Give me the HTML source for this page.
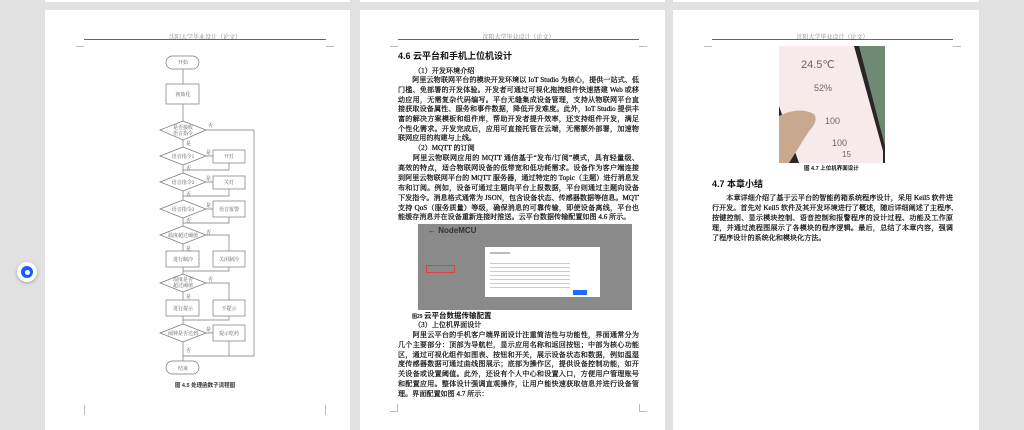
<!DOCTYPE html>
<html><head><meta charset="utf-8"><style>
*{margin:0;padding:0;box-sizing:border-box}
body{width:1024px;height:414px;background:#e1e1e1;position:relative;overflow:hidden;font-family:"Liberation Serif","Noto Serif CJK SC",serif;color:#111}
.pg{position:absolute;background:#fff;top:10px;height:420px}
.top{position:absolute;background:#fff;top:0;height:2px}
.hd{position:absolute;font-size:6px;color:#888;text-align:center;top:32px}
.hl{position:absolute;height:1px;background:#666;top:39px}
.cm{position:absolute;width:8px;height:8px;border-color:#bbb;border-style:solid;border-width:0}
.ln{position:absolute;font-size:7.1px;line-height:10px;white-space:nowrap;text-align:justify;text-align-last:justify;height:10px;overflow:hidden;-webkit-text-stroke:0.25px #111}
.t{position:absolute;font-size:7.1px;line-height:10px;white-space:nowrap;-webkit-text-stroke:0.25px #111}
.b{font-family:"Liberation Sans","Noto Sans CJK SC",sans-serif;font-weight:bold;-webkit-text-stroke:0}
</style></head><body>
<div class="top" style="left:45px;width:305px"></div>
<div class="top" style="left:360px;width:305px"></div>
<div class="top" style="left:673px;width:306px"></div>

<!-- page 1 -->
<div class="pg" style="left:45px;width:305px"></div>
<div class="hd" style="left:84px;width:242px">沈阳大学毕业设计（论文）</div>
<div class="hl" style="left:84px;width:242px"></div>
<div class="cm" style="left:76px;top:39px;width:8px;border-bottom-width:1px"></div>
<div class="cm" style="left:326px;top:39px;border-bottom-width:1px"></div>
<div class="cm" style="left:84px;top:405px;border-left-width:1px;height:10px"></div>
<div class="cm" style="left:325px;top:405px;border-left-width:1px;height:10px"></div>
<svg style="position:absolute;left:0;top:0" width="350" height="414" font-family="Liberation Serif,Noto Serif CJK SC,serif" font-size="5" fill="#555">
<g stroke="#777" stroke-width="0.7" fill="none">
<rect x="166" y="56" width="33" height="13" rx="6.5"/>
<rect x="166" y="84" width="33" height="20"/>
<polygon points="160,130 183,121 206,130 183,140"/>
<polygon points="160,156 183,147 206,156 183,165"/>
<polygon points="160,182 183,173 206,182 183,191"/>
<polygon points="160,209 183,200 206,209 183,218"/>
<polygon points="160,235 183,226 206,235 183,244"/>
<polygon points="160,283 183,274 206,283 183,292"/>
<polygon points="160,333 183,324 206,333 183,342"/>
<rect x="213" y="150" width="32" height="13"/>
<rect x="213" y="176" width="32" height="13"/>
<rect x="213" y="201" width="32" height="16"/>
<rect x="166" y="251" width="33" height="16"/>
<rect x="213" y="251" width="32" height="16"/>
<rect x="166" y="300" width="33" height="16"/>
<rect x="213" y="300" width="32" height="16"/>
<rect x="213" y="325" width="32" height="16"/>
<rect x="166" y="361" width="33" height="13" rx="6.5"/>
<path d="M183 69V84M183 104V121M183 140V147M183 165V173M183 191V200M183 218V226M183 244V251M183 267V274M183 292V300M183 316V324M183 342V361"/>
<path d="M206 130H254V356H183M206 156H213M229 163V170H183M206 182H213M229 189V196H183M206 209H213M229 217V223H183M206 235H229V251M229 267V271H183M206 283H229V300M229 316V320H183M206 333H213M229 341V356"/>
</g>
<g text-anchor="middle">
<text x="183" y="64">开始</text><text x="183" y="96">初始化</text>
<text x="183" y="129">是否接收</text><text x="183" y="135">语音指令</text>
<text x="183" y="158">语音指令1</text><text x="183" y="184">语音指令2</text><text x="183" y="211">语音指令3</text>
<text x="183" y="237">温度超过阈值</text><text x="183" y="281">湿度是否</text><text x="183" y="287">超过阈值</text>
<text x="183" y="335">闹钟是否达到</text>
<text x="229" y="158">开灯</text><text x="229" y="184">关灯</text><text x="229" y="211">语音报警</text>
<text x="183" y="261">进行制冷</text><text x="229" y="261">关闭制冷</text>
<text x="183" y="310">进行提示</text><text x="229" y="310">不提示</text><text x="229" y="335">提示吃药</text>
<text x="183" y="370">结束</text>
</g>
<g font-size="5"><text x="208" y="127">否</text><text x="186" y="145">是</text><text x="206" y="154">是</text><text x="186" y="170">否</text><text x="206" y="180">是</text><text x="186" y="196">否</text><text x="206" y="207">是</text><text x="186" y="222">否</text><text x="206" y="234">否</text><text x="186" y="250">是</text><text x="208" y="281">否</text><text x="186" y="298">是</text><text x="206" y="331">是</text><text x="186" y="352">否</text></g>
<text x="205" y="387" text-anchor="middle" font-size="5.5" font-weight="bold" fill="#333" font-family="Liberation Sans,Noto Sans CJK SC,sans-serif">图 4.5  处理函数子流程图</text>
</svg>
<div style="position:absolute;left:17px;top:262px;width:20px;height:20px;border-radius:50%;background:#fff;box-shadow:0 1px 3px rgba(0,0,0,.3)"></div>
<div style="position:absolute;left:21px;top:266px;width:12px;height:12px;border-radius:50%;background:#1a5cff"></div>
<div style="position:absolute;left:24.5px;top:269.5px;width:5px;height:5px;border-radius:50%;background:#fff"></div>

<!-- page 2 -->
<div class="pg" style="left:360px;width:305px"></div>
<div class="hd" style="left:398px;width:241px">沈阳大学毕业设计（论文）</div>
<div class="hl" style="left:398px;width:241px"></div>
<div class="cm" style="left:390px;top:39px;border-bottom-width:1px"></div>
<div class="cm" style="left:639px;top:39px;border-bottom-width:1px"></div>
<div class="t b" style="left:398px;top:51px;font-size:9px">4.6 云平台和手机上位机设计</div>
<div class="t" style="left:414px;top:66px">（1）开发环境介绍</div>
<div class="ln" style="left:398px;top:75px;width:241px">　　阿里云物联网平台的模块开发环境以 IoT Studio 为核心，提供一站式、低</div>
<div class="ln" style="left:398px;top:85px;width:241px">门槛、免部署的开发体验。开发者可通过可视化拖拽组件快速搭建 Web 或移</div>
<div class="ln" style="left:398px;top:95px;width:241px">动应用，无需复杂代码编写。平台无缝集成设备管理，支持从物联网平台直</div>
<div class="ln" style="left:398px;top:104px;width:241px">接获取设备属性、服务和事件数据，降低开发难度。此外，IoT Studio 提供丰</div>
<div class="ln" style="left:398px;top:114px;width:241px">富的解决方案模板和组件库，帮助开发者提升效率，还支持组件开发，满足</div>
<div class="ln" style="left:398px;top:124px;width:241px">个性化需求。开发完成后，应用可直接托管在云端，无需额外部署，加速物</div>
<div class="t" style="left:398px;top:133px">联网应用的构建与上线。</div>
<div class="t" style="left:414px;top:143px">（2）MQTT 的订阅</div>
<div class="ln" style="left:398px;top:153px;width:241px">　　阿里云物联网应用的 MQTT 通信基于“发布/订阅”模式，具有轻量级、</div>
<div class="ln" style="left:398px;top:163px;width:241px">高效的特点，适合物联网设备的低带宽和低功耗需求。设备作为客户端连接</div>
<div class="ln" style="left:398px;top:173px;width:241px">到阿里云物联网平台的 MQTT 服务器，通过特定的 Topic（主题）进行消息发</div>
<div class="ln" style="left:398px;top:183px;width:241px">布和订阅。例如，设备可通过主题向平台上报数据，平台则通过主题向设备</div>
<div class="ln" style="left:398px;top:193px;width:241px">下发指令。消息格式通常为 JSON，包含设备状态、传感器数据等信息。MQTT</div>
<div class="ln" style="left:398px;top:203px;width:241px">支持 QoS（服务质量）等级，确保消息的可靠传输，即使设备离线，平台也</div>
<div class="t" style="left:398px;top:212px">能缓存消息并在设备重新连接时推送。云平台数据传输配置如图 4.6 所示。</div>
<div style="position:absolute;left:418px;top:224px;width:214px;height:86px;background:#8a8a8a"></div>
<div class="t b" style="left:428px;top:226px;font-size:8px;color:#333">← NodeMCU</div>
<div style="position:absolute;left:426px;top:265px;width:29px;height:8px;border:1px solid #d44"></div>
<div style="position:absolute;left:485px;top:247px;width:115px;height:50px;background:#fff"></div>
<div style="position:absolute;left:490px;top:252px;width:20px;height:2px;background:#bbb"></div>
<div style="position:absolute;left:490px;top:260px;width:80px;height:30px;background:repeating-linear-gradient(#fff 0 3px,#ccc 3px 4px)"></div>
<div style="position:absolute;left:573px;top:290px;width:14px;height:5px;background:#1a6cff"></div>
<div class="t b" style="left:412px;top:311px;font-size:7.5px"><span style="font-size:5px">图29 </span>云平台数据传输配置</div>
<div class="t" style="left:414px;top:320px">（3）上位机界面设计</div>
<div class="ln" style="left:398px;top:330px;width:241px">　　阿里云平台的手机客户端界面设计注重简洁性与功能性，界面通常分为</div>
<div class="ln" style="left:398px;top:340px;width:241px">几个主要部分：顶部为导航栏，显示应用名称和返回按钮；中部为核心功能</div>
<div class="ln" style="left:398px;top:350px;width:241px">区，通过可视化组件如图表、按钮和开关，展示设备状态和数据，例如温湿</div>
<div class="ln" style="left:398px;top:359px;width:241px">度传感器数据可通过曲线图展示；底部为操作区，提供设备控制功能，如开</div>
<div class="ln" style="left:398px;top:369px;width:241px">关设备或设置阈值。此外，还设有个人中心和设置入口，方便用户管理账号</div>
<div class="ln" style="left:398px;top:379px;width:241px">和配置应用。整体设计强调直观操作，让用户能快速获取信息并进行设备管</div>
<div class="t" style="left:398px;top:389px">理。界面配置如图 4.7 所示：</div>
<div class="cm" style="left:390px;top:404px;border-bottom-width:1px;border-right-width:1px"></div>
<div class="cm" style="left:639px;top:404px;border-bottom-width:1px;border-left-width:1px"></div>

<!-- page 3 -->
<div class="pg" style="left:673px;width:306px"></div>
<div class="hd" style="left:712px;width:241px">沈阳大学毕业设计（论文）</div>
<div class="hl" style="left:712px;width:241px"></div>
<div class="cm" style="left:704px;top:39px;border-bottom-width:1px"></div>
<div class="cm" style="left:953px;top:39px;border-bottom-width:1px"></div>
<svg style="position:absolute;left:779px;top:46px" width="106" height="117" font-family="Liberation Sans,sans-serif" fill="#666">
<rect width="106" height="117" fill="#6f8a72"/>
<path d="M0 0H80L106 100V117H0Z" fill="#2a2626"/>
<path d="M0 0H75L104 105V117H20L0 60Z" fill="#f6eaea"/>
<path d="M0 70Q20 60 35 68Q40 75 30 85L10 117H0Z" fill="#c9a890"/>
<text x="22" y="22" font-size="11">24.5℃</text><text x="35" y="45" font-size="9">52%</text>
<text x="46" y="78" font-size="9">100</text><text x="53" y="100" font-size="9">100</text><text x="63" y="111" font-size="8">15</text>
</svg>
<div class="t b" style="left:804px;top:164px;font-size:5.5px">图 4.7  上位机界面设计</div>
<div class="t b" style="left:712px;top:179px;font-size:9px">4.7  本章小结</div>
<div class="ln" style="left:712px;top:193px;width:241px">　　本章详细介绍了基于云平台的智能药箱系统程序设计，采用 Keil5 软件进</div>
<div class="ln" style="left:712px;top:203px;width:241px">行开发。首先对 Keil5 软件及其开发环境进行了概述，随后详细阐述了主程序、</div>
<div class="ln" style="left:712px;top:213px;width:241px">按键控制、显示模块控制、语音控制和报警程序的设计过程、功能及工作原</div>
<div class="ln" style="left:712px;top:223px;width:241px">理，并通过流程图展示了各模块的程序逻辑。最后，总结了本章内容，强调</div>
<div class="t" style="left:712px;top:233px">了程序设计的系统化和模块化方法。</div>
</body></html>
